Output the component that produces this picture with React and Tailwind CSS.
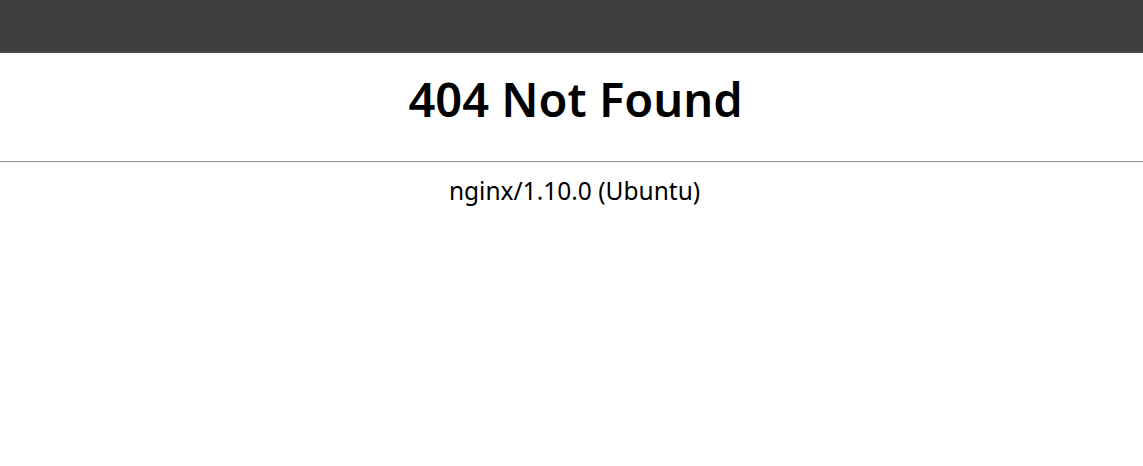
export default function App() {
  return (
    <div className="min-h-[466px] bg-white">
      <div className="h-[53px] bg-[#3d3d3d] border-b-2 border-[#4b4b4b]" />
      <div className="flex flex-col items-center">
        <h1
          className="mt-[14px] h-[94px] pl-[8px] text-[47px] leading-[64px] font-semibold text-black"
          style={{ fontFamily: '"Noto Sans", sans-serif' }}
        >
          404 Not Found
        </h1>
        <div className="w-full border-t border-[#9a9a9a] border-b border-b-[#eeeeee]" />
        <p
          className="mt-[13px] pl-[6px] text-[24.5px] leading-[30px] text-black"
          style={{ fontFamily: '"Noto Sans", sans-serif' }}
        >
          nginx/1.10.0 (Ubuntu)
        </p>
      </div>
    </div>
  )
}
